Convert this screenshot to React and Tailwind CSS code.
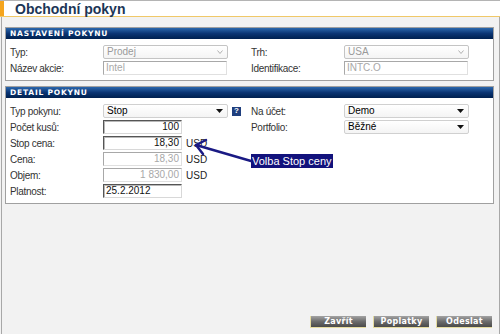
import React from "react";

const Label = ({ children, w = "w-[93px]" }) => (
  <div className={`${w} shrink-0 text-[10px] tracking-[-0.3px] text-[#333]`}>{children}</div>
);

const Select = ({ value, disabled, w = "w-[125px]" }) => (
  <div
    className={`${w} h-[14px] flex items-center justify-between pl-[3px] pr-[4px] rounded-[2px] border bg-gradient-to-b from-white to-[#f4f4f4] ${
      disabled ? "border-[#c4c4c4] text-[#9a9a9a]" : "border-[#d0d0d0] text-black"
    }`}
  >
    <span className="text-[10px] leading-none">{value}</span>
    {disabled ? (
      <svg width="6" height="4" viewBox="0 0 6 4">
        <path d="M0.5 0.5 L3 3.5 L5.5 0.5" fill="none" stroke="#b0b0b0" strokeWidth="1" />
      </svg>
    ) : (
      <svg width="7" height="4" viewBox="0 0 7 4">
        <path d="M0 0 L7 0 L3.5 4 Z" fill="#111" />
      </svg>
    )}
  </div>
);

const Input = ({ value, disabled, right = true, w = "w-[79px]" }) => (
  <div
    className={`${w} h-[14px] flex items-center px-[2px] bg-white border ${
      disabled
        ? "border-t-[#a8a8a8] border-l-[#a8a8a8] border-r-[#e0e0e0] border-b-[#e0e0e0] text-[#a8a8a8]"
        : "border-t-[#555] border-l-[#555] border-r-[#d8d8d8] border-b-[#d8d8d8] text-[#111] shadow-[inset_1px_1px_0_#b8b8b8]"
    } ${right ? "justify-end" : "justify-start"}`}
  >
    <span className="text-[10px] leading-none">{value}</span>
  </div>
);

const Row = ({ children }) => <div className="h-[16px] flex items-center">{children}</div>;

const Usd = () => <span className="ml-[4px] text-[10px] text-[#222]">USD</span>;

const Section = ({ title, children }) => (
  <div className="ml-[3px] w-[489px] border border-[#a0a0a0] bg-white">
    <div className="h-[11px] bg-gradient-to-b from-[#2c68ad] via-[#0b3574] to-[#00204f] flex items-center pl-[4px]">
      <span className="font-['DejaVu_Sans',sans-serif] font-bold text-[7.5px] tracking-[0.8px] text-white leading-none">
        {title}
      </span>
    </div>
    <div className="pt-[5px] pb-[4px] pl-[4px] flex">{children}</div>
  </div>
);

const Button = ({ children }) => (
  <div className="w-[56px] h-[12px] flex items-center justify-center bg-gradient-to-b from-[#a4a4a4] via-[#6c6c6c] to-[#4a4a4a] border-l border-b border-l-[#e6dca0] border-b-[#e6dca0]">
    <span className="font-['DejaVu_Sans',sans-serif] font-bold text-[8px] tracking-[0.3px] text-white leading-none">
      {children}
    </span>
  </div>
);

export default function App() {
  return (
    <div className="w-[500px] h-[334px] bg-[#f2f2f2] flex flex-col relative overflow-hidden font-['Liberation_Sans',Arial,sans-serif]">
      <div className="h-[17px] shrink-0 flex bg-white border-t border-t-[#b4b4b4] border-b border-b-[#f0c868]">
        <div className="w-[4px] h-full bg-[#f5a51e]" />
        <div className="pl-[11px] flex items-center text-[14px] font-bold text-[#1c3656] leading-none">
          Obchodní pokyn
        </div>
      </div>

      <div className="flex-1 flex flex-col ml-[1px] border-l border-r border-[#a8a8a8] pt-[10px]">
        <Section title="NASTAVENÍ POKYNU">
          <div className="w-[241px]">
            <Row>
              <Label>Typ:</Label>
              <Select value="Prodej" disabled />
            </Row>
            <Row>
              <Label>Název akcie:</Label>
              <Input value="Intel" disabled right={false} w="w-[124px]" />
            </Row>
          </div>
          <div>
            <Row>
              <Label>Trh:</Label>
              <Select value="USA" disabled />
            </Row>
            <Row>
              <Label>Identifikace:</Label>
              <Input value="INTC.O" disabled right={false} w="w-[124px]" />
            </Row>
          </div>
        </Section>

        <div className="h-[5px]" />

        <Section title="DETAIL POKYNU">
          <div className="w-[241px]">
            <Row>
              <Label>Typ pokynu:</Label>
              <Select value="Stop" />
              <div className="ml-[4px] w-[9px] h-[9px] bg-[#1f3f7e] flex items-center justify-center text-white text-[8px] font-bold leading-none">
                ?
              </div>
            </Row>
            <Row>
              <Label>Počet kusů:</Label>
              <Input value="100" />
            </Row>
            <Row>
              <Label>Stop cena:</Label>
              <Input value="18,30" />
              <Usd />
            </Row>
            <Row>
              <Label>Cena:</Label>
              <Input value="18,30" disabled />
              <Usd />
            </Row>
            <Row>
              <Label>Objem:</Label>
              <Input value="1 830,00" disabled />
              <Usd />
            </Row>
            <Row>
              <Label>Platnost:</Label>
              <Input value="25.2.2012" right={false} />
            </Row>
          </div>
          <div>
            <Row>
              <Label>Na účet:</Label>
              <Select value="Demo" />
            </Row>
            <Row>
              <Label>Portfolio:</Label>
              <Select value="Běžné" />
            </Row>
          </div>
        </Section>

        <div className="flex-1" />

        <div className="flex justify-end gap-[7px] pr-[7px] pb-[6px]">
          <Button>Zavřít</Button>
          <Button>Poplatky</Button>
          <Button>Odeslat</Button>
        </div>
      </div>

      <div className="absolute left-[251px] top-[154px] h-[14px] px-[1px] bg-[#12127c] text-white text-[11px] leading-[14px] whitespace-nowrap">
        Volba Stop ceny
      </div>

      <svg className="absolute left-0 top-0 pointer-events-none" width="500" height="334">
        <g stroke="#1a1a84" strokeWidth="2.5" fill="none" strokeLinecap="round" strokeLinejoin="round">
          <path d="M251 161 L196 145" />
          <path d="M206 140 L196 145 L203 154" />
        </g>
      </svg>
    </div>
  );
}
